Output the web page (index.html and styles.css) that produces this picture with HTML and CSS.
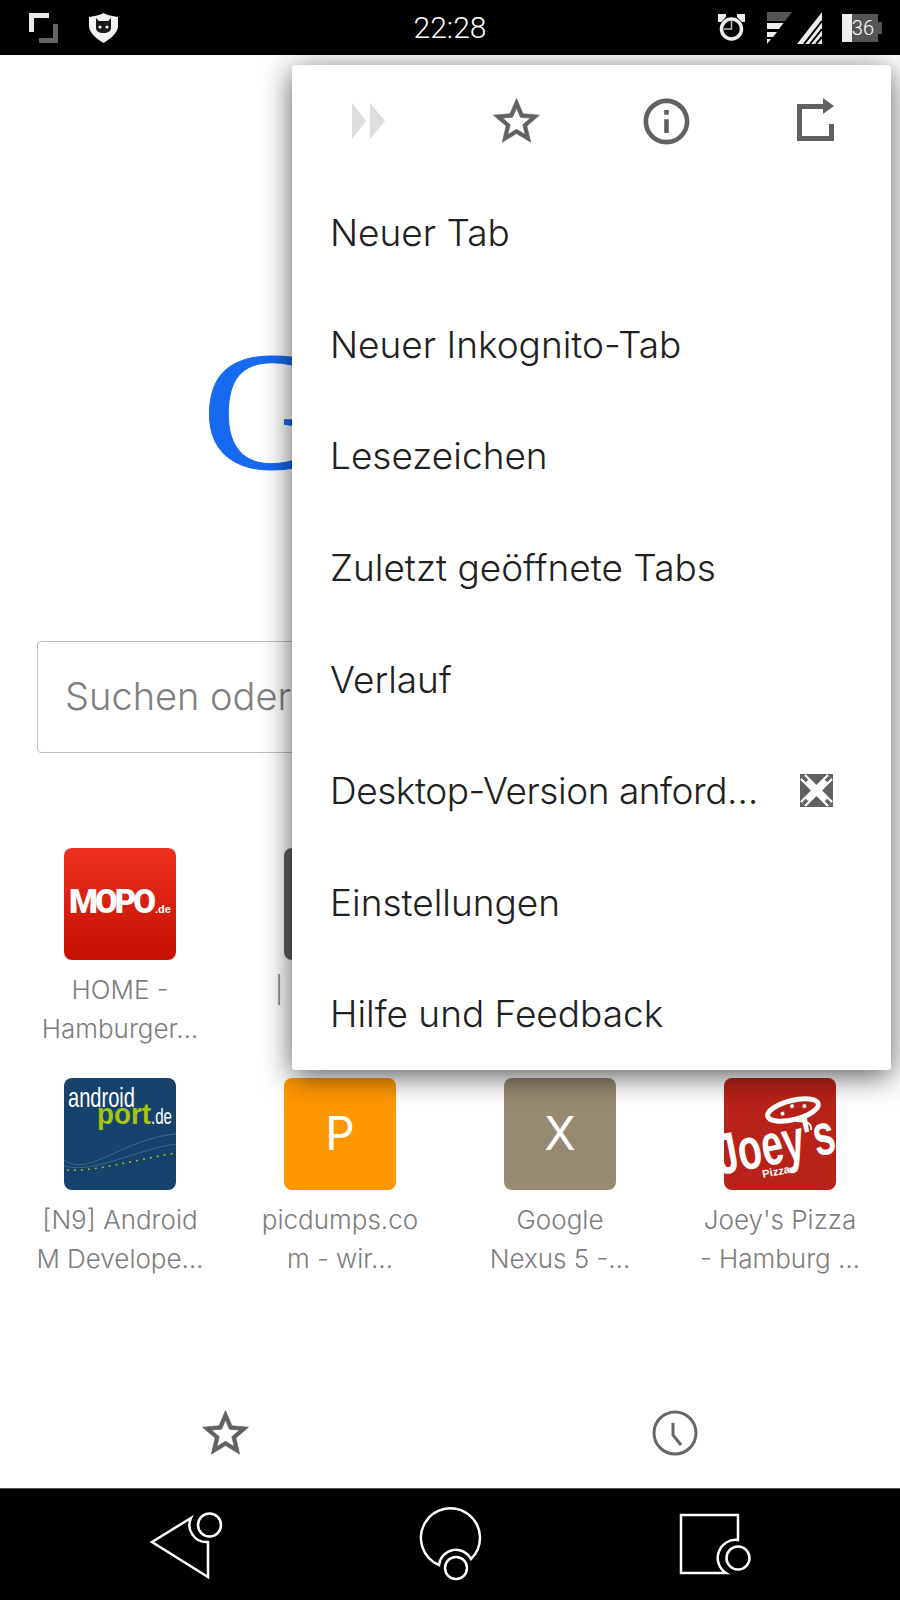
FILE: index.html
```html
<!DOCTYPE html>
<html lang="de">
<head>
<meta charset="UTF-8" />
<meta name="viewport" content="width=device-width, initial-scale=1" />
<title>Neuer Tab</title>
<link rel="stylesheet" href="styles.css">
</head>
<body>

<div class="screen">

  <!-- Status bar -->
  <header class="statusbar">
    <div class="status-left">
      <svg class="ic-screen" width="29" height="30" viewBox="0 0 29 30">
        <path fill="#e8e8e8" d="M0 0H20V5H5V19H0Z" />
        <path fill="#666" d="M24 11H29V30H10V25H24Z" />
      </svg>
      <svg class="ic-shield" width="29" height="30" viewBox="0 0 29 30">
        <path fill="#f2f2f2" d="M14.500 0C18 2.500 24 3 29 4V13C29 21 19 27 14.500 30C10 27 0 21 0 13V4C5 3 11 2.500 14.500 0Z" />
        <path fill="#1a1a1a" d="M7 5L10 8H19L22 5V15C22 18 19 20 14.500 20C10 20 7 18 7 15Z" />
        <circle cx="11" cy="14" r="1.600" fill="#f2f2f2" />
        <circle cx="18" cy="14" r="1.600" fill="#f2f2f2" />
      </svg>
    </div>
    <div class="time">22:28</div>
    <div class="status-right">
      <svg class="ic-alarm" width="27" height="27" viewBox="0 0 27 27">
        <circle cx="13.500" cy="15" r="10" fill="none" stroke="#eee" stroke-width="3.500" />
        <path fill="#eee" d="M0 0H8V3L3 8H0ZM27 0H19V3L24 8H27Z" />
        <path fill="none" stroke="#bbb" stroke-width="1.500" d="M13.500 7V15H6" />
      </svg>
      <svg class="ic-wifi" width="25" height="32" viewBox="0 0 25 32">
        <path fill="#555" d="M0 0H25L18 9H0Z" />
        <path fill="#eee" d="M0 11H16.500L12 17H0ZM0 20H10L6 25H0ZM0 27H4L0 32Z" />
      </svg>
      <svg class="ic-cell" width="25" height="32" viewBox="0 0 25 32">
        <path fill="#eee" d="M25 0V32H0Z" />
        <path fill="none" stroke="#000" stroke-width="2" d="M25 9L7 32M25 17L13 32M25 25L19 32" />
      </svg>
      <div class="battery">
        <span class="battery-fill"></span>
        <span class="battery-level">36</span>
      </div>
    </div>
  </header>

  <main class="page">
    <div class="logo"><span class="logo-g">G</span></div>

    <div class="search">Suchen oder</div>

    <div class="tiles">
      <div class="tile">
        <div class="tile-icon mopo"><span class="mopo-name">MOPO</span><span class="mopo-de">.de</span></div>
        <div class="tile-label"><span>HOME -</span><span>Hamburger…</span></div>
      </div>
      <div class="tile">
        <div class="tile-icon dark"></div>
        <div class="tile-label tile-label-left"><span>| I</span></div>
      </div>
      <div class="tile"></div>
      <div class="tile"></div>

      <div class="tile">
        <div class="tile-icon droid">
          <svg width="112" height="112" viewBox="0 0 112 112">
            <path fill="none" stroke="#3f6a8f" stroke-width="1" d="M0 82C25 100 60 60 112 56M0 88C30 96 70 72 112 66" />
            <path fill="none" stroke="#a6c411" stroke-width="1.500" stroke-dasharray="2 5" d="M3 92C30 94 70 82 112 75" />
            <text class="logo-droid" x="4" y="29" font-size="28" textLength="67" lengthAdjust="spacingAndGlyphs">android</text>
            <text class="logo-port" x="33" y="46" font-size="30" textLength="54" lengthAdjust="spacingAndGlyphs">port</text>
            <text class="logo-droid" x="87" y="46" font-size="22" textLength="21" lengthAdjust="spacingAndGlyphs">.de</text>
          </svg>
        </div>
        <div class="tile-label"><span>[N9] Android</span><span>M Develope…</span></div>
      </div>
      <div class="tile">
        <div class="tile-icon orange">P</div>
        <div class="tile-label"><span>picdumps.co</span><span>m - wir…</span></div>
      </div>
      <div class="tile">
        <div class="tile-icon taupe">X</div>
        <div class="tile-label"><span>Google</span><span>Nexus 5 -…</span></div>
      </div>
      <div class="tile">
        <div class="tile-icon joeys">
          <svg width="112" height="112" viewBox="0 0 112 112">
            <g transform="rotate(-14 69 32)">
              <ellipse cx="69" cy="32" rx="26" ry="9.500" fill="none" stroke="#fff" stroke-width="5" />
              <circle cx="58" cy="33" r="2" fill="#fff" />
              <circle cx="69" cy="28" r="2" fill="#fff" />
              <circle cx="81" cy="31" r="2" fill="#fff" />
            </g>
            <path fill="none" stroke="#fff" stroke-width="2" d="M72 43C84 43 88 46 87 52" />
            <text class="logo-joeys" transform="translate(-4 97) rotate(-11)" font-size="58" textLength="120" lengthAdjust="spacingAndGlyphs">Joey's</text>
            <text class="logo-pizza" transform="translate(39 100) rotate(-11)" font-size="11" textLength="28" lengthAdjust="spacingAndGlyphs">Pizza</text>
          </svg>
        </div>
        <div class="tile-label"><span>Joey's Pizza</span><span>- Hamburg …</span></div>
      </div>
    </div>

    <div class="bottom-tabs">
      <svg class="ic-star" width="55" height="55" viewBox="0 0 24 24"><path d="M22 9.240l-7.190-.620L12 2 9.190 8.630 2 9.240l5.460 4.730L5.820 21 12 17.270 18.180 21l-1.630-7.030L22 9.240zM12 15.400l-3.760 2.270 1-4.280-3.320-2.880 4.380-.380L12 6.100l1.710 4.040 4.380.380-3.320 2.880 1 4.280L12 15.400z" /></svg>
      <svg width="46" height="46" viewBox="0 0 46 46">
        <circle cx="23" cy="23" r="21" fill="none" stroke="#666" stroke-width="3" />
        <path fill="none" stroke="#666" stroke-width="3" d="M21 13V25L29 35" />
      </svg>
    </div>

    <!-- Overflow menu -->
    <nav class="menu">
      <div class="menu-icons">
        <svg width="33" height="36" viewBox="0 0 33 36"><path fill="#ddd" d="M0 0L14 18L0 36ZM18 0L33 18L18 36Z" /></svg>
        <svg class="ic-star ic-star-menu" width="55" height="55" viewBox="0 0 24 24"><path d="M22 9.240l-7.190-.620L12 2 9.190 8.630 2 9.240l5.460 4.730L5.820 21 12 17.270 18.180 21l-1.630-7.030L22 9.240zM12 15.400l-3.760 2.270 1-4.280-3.320-2.880 4.380-.380L12 6.100l1.710 4.040 4.380.380-3.320 2.880 1 4.280L12 15.400z" /></svg>
        <svg width="55" height="55" viewBox="0 0 24 24"><path fill="#616161" d="M11 17h2v-6h-2v6zm1-15C6.480 2 2 6.480 2 12s4.480 10 10 10 10-4.480 10-10S17.520 2 12 2zm0 18c-4.410 0-8-3.590-8-8s3.590-8 8-8 8 3.590 8 8-3.590 8-8 8zM11 9h2V7h-2v2z" /></svg>
        <svg class="ic-share" width="37" height="43" viewBox="0 0 37 43"><path fill="#616161" d="M0 6H26V0L37 8L26 16V11H5V38H32V26H37V43H0Z" /></svg>
      </div>
      <div class="menu-item">Neuer Tab</div>
      <div class="menu-item">Neuer Inkognito-Tab</div>
      <div class="menu-item">Lesezeichen</div>
      <div class="menu-item">Zuletzt geöffnete Tabs</div>
      <div class="menu-item">Verlauf</div>
      <div class="menu-item menu-item-check">
        <span class="menu-item-long">Desktop-Version anford…</span>
        <svg width="33" height="33" viewBox="0 0 33 33">
          <rect width="33" height="33" fill="#616161" />
          <path fill="none" stroke="#fff" stroke-width="8" d="M3 3L30 30M30 3L3 30" />
          <path fill="none" stroke="#616161" stroke-width="3.500" d="M3 3L7 7M30 3L26 7M3 30L7 26M30 30L26 26" />
        </svg>
      </div>
      <div class="menu-item">Einstellungen</div>
      <div class="menu-item">Hilfe und Feedback</div>
    </nav>
  </main>

  <!-- Navigation bar -->
  <footer class="navbar">
    <svg width="100" height="112" viewBox="0 0 100 112">
      <path class="nav-line" d="M61 29L22 53L78 88V53A17 17 0 0 1 61 29Z" />
      <circle class="nav-line" cx="79.500" cy="36" r="11.500" />
    </svg>
    <svg width="100" height="112" viewBox="0 0 100 112">
      <path class="nav-line" d="M39 76A29.500 29.500 0 1 1 71 70A17 17 0 0 0 39 76Z" />
      <circle class="nav-line" cx="56" cy="79" r="11" />
    </svg>
    <svg width="100" height="112" viewBox="0 0 100 112">
      <path class="nav-line" d="M11 26H68V51A18 18 0 0 0 56 84H11Z" />
      <circle class="nav-line" cx="68" cy="69" r="11.500" />
    </svg>
  </footer>

</div>

</body>
</html>
```

FILE: styles.css
```css
/* Reset & base */
html, body {
  margin: 0;
  padding: 0;
  background: #fff;
  font-family: Inter, Lato, sans-serif;
  font-weight: 300;
}

.screen {
  width: 900px;
  height: 1600px;
  display: flex;
  flex-direction: column;
  overflow: hidden;
}

/* Status bar */
.statusbar {
  flex: none;
  height: 55px;
  background: #000;
  display: grid;
  grid-template-columns: 1fr auto 1fr;
  align-items: center;
  color: #fff;
}
.status-left {
  display: flex;
  align-items: center;
  padding-left: 29px;
  gap: 31px;
}
.status-right {
  display: flex;
  align-items: center;
  justify-content: flex-end;
  padding-right: 18px;
}
.time {
  font-family: Roboto, sans-serif;
  font-weight: 300;
  font-size: 30px;
}
.ic-wifi { margin-left: 22px; }
.ic-cell { margin-left: 5px; }

.battery {
  position: relative;
  width: 36px;
  height: 28px;
  margin-left: 20px;
  margin-right: 4px;
  background: #555;
  font-family: Roboto, sans-serif;
  font-size: 20px;
  line-height: 28px;
  text-align: right;
}
.battery::after {
  content: "";
  position: absolute;
  right: -4px;
  top: 8px;
  width: 4px;
  height: 12px;
  background: #555;
}
.battery-fill {
  position: absolute;
  left: 0;
  top: 0;
  width: 10px;
  height: 100%;
  background: #eee;
}
.battery-level {
  position: relative;
  padding-right: 4px;
}

/* Page under the menu */
.page {
  position: relative;
  flex: 1;
  display: flex;
  flex-direction: column;
  min-height: 0;
}

.logo {
  height: 586px;
  box-sizing: border-box;
  padding: 271px 0 0 202px;
  font-family: "Liberation Serif", serif;
  font-weight: 400;
  font-size: 170px;
  line-height: 170px;
  color: #1769f0;
}
.logo-g {
  display: inline-block;
  transform: scaleX(1.08);
  transform-origin: left;
  -webkit-text-stroke: 1px #1769f0;
}

.search {
  height: 112px;
  margin: 0 37px;
  padding-left: 27px;
  box-sizing: border-box;
  border: 1px solid #bdbdbd;
  border-radius: 4px;
  font-size: 38px;
  line-height: 108px;
  color: #808080;
  white-space: nowrap;
  overflow: hidden;
}

/* Most visited tiles */
.tiles {
  margin-top: 95px;
  padding: 0 10px;
  display: grid;
  grid-template-columns: repeat(4, 220px);
  grid-auto-rows: 201px;
  row-gap: 29px;
}
.tile {
  display: flex;
  flex-direction: column;
  align-items: center;
}
.tile-icon {
  width: 112px;
  height: 112px;
  border-radius: 8px;
  overflow: hidden;
  display: flex;
  align-items: center;
  justify-content: center;
  color: #fff;
  font-size: 46px;
  font-weight: 400;
}
.tile-label {
  margin-top: 10px;
  font-size: 26px;
  line-height: 39px;
  color: #7d7d7d;
  text-align: center;
  white-space: nowrap;
}
.tile-label span { display: block; }
.tile-label-left {
  align-self: flex-start;
  margin-left: 45px;
}

.mopo {
  background: linear-gradient(#ee3020, #c41000);
  align-items: baseline;
  line-height: 108px;
}
.mopo-name {
  font-family: Roboto, sans-serif;
  font-weight: 900;
  font-size: 33px;
  letter-spacing: -3px;
}
.mopo-de {
  font-family: "Liberation Sans", sans-serif;
  font-size: 11px;
  font-weight: 700;
  margin-left: 2px;
}
.dark { background: #616161; }
.droid { background: #17426b; }
.orange { background: #ff9800; padding-bottom: 3px; box-sizing: border-box; }
.taupe { background: #978a72; padding-bottom: 3px; box-sizing: border-box; }
.joeys { background: #b92218; }

.logo-droid {
  font-family: "Liberation Sans", sans-serif;
  font-weight: 400;
  fill: #fff;
}
.logo-port {
  font-family: "Liberation Sans", sans-serif;
  font-weight: 700;
  fill: #a6c411;
}
.logo-joeys {
  font-family: "Liberation Sans", sans-serif;
  font-weight: 700;
  fill: #fff;
}
.logo-pizza {
  font-family: "Liberation Sans", sans-serif;
  font-weight: 700;
  fill: #fff;
}

.bottom-tabs {
  margin-top: auto;
  height: 110px;
  display: grid;
  grid-template-columns: 1fr 1fr;
  align-items: center;
  justify-items: center;
}

/* Icons */
.ic-star path {
  fill: #616161;
  stroke: #616161;
  stroke-width: 0.3;
}
.ic-star-menu { margin-right: 3px; }
.ic-share { margin-bottom: 4px; }

/* Overflow menu */
.menu {
  position: absolute;
  top: 10px;
  right: 9px;
  width: 599px;
  height: 1005px;
  border-radius: 3px;
  background: #fff;
  box-shadow: 0 6px 30px rgba(0, 0, 0, 0.65);
  font-size: 37px;
  color: #212121;
}
.menu-icons {
  height: 112px;
  padding-left: 2px;
  display: grid;
  grid-template-columns: repeat(4, 149px);
  align-items: center;
  justify-items: center;
}
.menu-item {
  height: 111.6px;
  padding-left: 38px;
  display: flex;
  align-items: center;
  white-space: nowrap;
}
.menu-item-check {
  justify-content: space-between;
  padding-right: 58px;
}
.menu-item-long { letter-spacing: -0.45px; }

/* Navigation bar */
.navbar {
  flex: none;
  height: 112px;
  background: #000;
  border-top: 1px solid #555;
  box-sizing: border-box;
  display: flex;
  justify-content: center;
  gap: 170px;
}
.nav-line {
  fill: none;
  stroke: #fff;
  stroke-width: 2.5;
}
```
